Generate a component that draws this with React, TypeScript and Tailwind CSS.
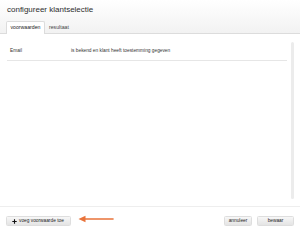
export default function App() {
  return (
    <div className="flex h-[233px] w-[300px] flex-col overflow-hidden bg-white font-['Liberation_Sans',Arial,sans-serif] text-[#333]">
      {/* header with title and tabs */}
      <div className="h-[34px] border-b border-[#dcdcdc] bg-gradient-to-b from-white to-[#f2f2f2] px-[6px]">
        <div className="pl-[1px] pt-[5px] text-[8px] leading-[10px] text-[#2e2e2e]">
          configureer klantselectie
        </div>
        <div className="mt-[6px] flex h-[13px] items-end">
          <div className="flex h-[13px] w-[39px] items-center justify-center rounded-t-[2px] border border-b-0 border-[#dcdcdc] bg-white text-[5.2px] text-[#222]">
            voorwaarden
          </div>
          <div className="flex h-[12px] items-center pl-[4px] text-[5.2px] text-[#444]">
            resultaat
          </div>
        </div>
      </div>

      {/* conditions */}
      <div className="flex flex-1 pl-[7px]">
        <div className="mt-[8px] w-[280px]">
          <div className="flex h-[19px] items-center border-b border-[#e6e6e6] text-[4.8px] text-[#333]">
            <div className="w-[64px] pl-[3px]">Email</div>
            <div>is bekend en klant heeft toestemming gegeven</div>
          </div>
        </div>
        <div className="ml-[4px] mt-[8px] h-[157px] w-[3px] rounded-full bg-[#ececec]" />
      </div>

      {/* footer */}
      <div className="flex h-[27px] items-start border-t border-[#eeeeee] px-[6px] pt-[9px]">
        <button className="flex h-[10px] w-[65px] items-center gap-[2px] rounded-[1.5px] border border-[#dedede] bg-gradient-to-b from-[#f7f7f7] to-[#e4e4e4] pl-[5px] text-[4.8px] text-[#222]">
          <svg width="5" height="5" viewBox="0 0 5 5">
            <path d="M2.5 0.3v4.4M0.3 2.5h4.4" stroke="#111" strokeWidth="1.1" />
          </svg>
          voeg voorwaarde toe
        </button>
        <svg width="36" height="8" viewBox="0 0 36 8" className="ml-[7px] mt-[-1px]">
          <path d="M6 4h29" stroke="#e9733a" strokeWidth="1.6" strokeLinecap="round" />
          <path d="M0.5 4L7.5 0.8V7.2Z" fill="#e9733a" />
        </svg>
        <div className="ml-auto flex gap-[5px]">
          <button className="flex h-[10px] w-[28px] items-center justify-center rounded-[1.5px] border border-[#dedede] bg-gradient-to-b from-[#f7f7f7] to-[#e4e4e4] text-[4.8px] text-[#222]">
            annuleer
          </button>
          <button className="flex h-[10px] w-[37px] items-center justify-center rounded-[1.5px] border border-[#dedede] bg-gradient-to-b from-[#f7f7f7] to-[#e4e4e4] text-[4.8px] text-[#222]">
            bewaar
          </button>
        </div>
      </div>
    </div>
  );
}
